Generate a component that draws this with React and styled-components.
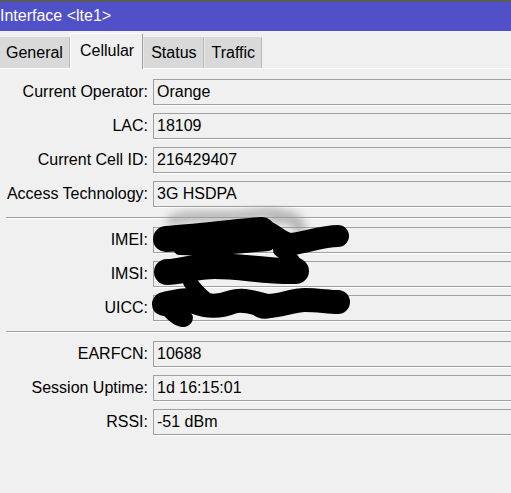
import React from "react";
import styled, { createGlobalStyle } from "styled-components";

const GlobalStyle = createGlobalStyle`
  html, body {
    margin: 0;
    padding: 0;
    background: #f0f0f0;
    overflow: hidden;
  }
  body {
    font-family: "Liberation Sans", Arial, sans-serif;
    font-size: 16px;
    color: #000;
  }
`;

const tabs = ["General", "Cellular", "Status", "Traffic"];

const groups = [
  [
    ["Current Operator:", "Orange"],
    ["LAC:", "18109"],
    ["Current Cell ID:", "216429407"],
    ["Access Technology:", "3G HSDPA"],
  ],
  [
    ["IMEI:", ""],
    ["IMSI:", ""],
    ["UICC:", ""],
  ],
  [
    ["EARFCN:", "10688"],
    ["Session Uptime:", "1d 16:15:01"],
    ["RSSI:", "-51 dBm"],
  ],
];

function Scribbles() {
  return (
    <Overlay viewBox="0 0 511 493" width="511" height="493">
      <defs>
        <filter id="smudge" x="-20%" y="-50%" width="140%" height="200%">
          <feGaussianBlur stdDeviation="4" />
        </filter>
      </defs>
      <g filter="url(#smudge)" fill="none" stroke="#9a9a9a" strokeLinecap="round" opacity="0.7">
        <path d="M172 220 C 190 214, 210 218, 240 216 C 258 214, 268 212, 278 214" strokeWidth="10" />
        <path d="M276 218 C 288 214, 298 220, 300 228" strokeWidth="12" />
      </g>
      <g fill="none" stroke="#000" strokeLinecap="round" strokeLinejoin="round">
        <path d="M166 239 C 195 237, 235 232, 262 230" strokeWidth="26" />
        <path d="M180 248 C 215 250, 245 246, 268 244" strokeWidth="14" />
        <path d="M262 231 C 272 231, 280 244, 292 244 C 308 242, 322 236, 338 236" strokeWidth="22" />
        <path d="M280 250 C 290 256, 296 262, 297 270" strokeWidth="14" />
        <path d="M167 272 C 180 272, 195 266, 215 266 C 240 266, 270 272, 296 271" strokeWidth="26" />
        <path d="M190 282 C 196 290, 200 294, 205 298" strokeWidth="14" />
        <path d="M164 304 C 175 302, 185 298, 195 302 C 210 308, 222 306, 232 302 C 245 298, 255 304, 268 306 C 282 306, 292 300, 305 300 C 318 300, 328 302, 338 302" strokeWidth="24" />
        <path d="M170 312 C 178 320, 184 322, 186 318" strokeWidth="14" />
        <path d="M255 310 C 262 316, 270 314, 276 310" strokeWidth="10" />
      </g>
    </Overlay>
  );
}

function App() {
  return (
    <Window>
      <GlobalStyle />
      <TitleBar>Interface &lt;lte1&gt;</TitleBar>
      <TabStrip>
        {tabs.map((t) => (
          <Tab key={t} $active={t === "Cellular"}>
            {t}
          </Tab>
        ))}
      </TabStrip>
      <Form>
        {groups.map((rows, i) => (
          <React.Fragment key={i}>
            {i > 0 && <Divider />}
            {rows.map(([label, value]) => (
              <Row key={label}>
                <Label>{label}</Label>
                <Field>{value}</Field>
              </Row>
            ))}
          </React.Fragment>
        ))}
      </Form>
      <Scribbles />
    </Window>
  );
}

export default App;

const Window = styled.div`
  position: relative;
  width: 511px;
  height: 493px;
  display: flex;
  flex-direction: column;
  background: #f0f0f0;
  overflow: hidden;
`;

const TitleBar = styled.div`
  box-sizing: border-box;
  height: 31px;
  border-top: 2px solid #5c5c5c;
  background: #5050c9;
  color: #fff;
  display: flex;
  align-items: center;
  padding-bottom: 1px;
  white-space: nowrap;
`;

const TabStrip = styled.div`
  box-sizing: border-box;
  height: 38px;
  display: flex;
  align-items: flex-end;
  border-bottom: 1px solid #fff;
`;

const Tab = styled.div`
  box-sizing: border-box;
  display: flex;
  align-items: center;
  height: ${(p) => (p.$active ? "36px" : "31px")};
  margin-bottom: ${(p) => (p.$active ? "-1px" : "0")};
  padding: ${(p) => (p.$active ? "0 8px 2px 9px" : "0 6px 0 7px")};
  background: ${(p) => (p.$active ? "#f0f0f0" : "#d9d9d9")};
  border-top: 1px solid ${(p) => (p.$active ? "#fff" : "#d9d9d9")};
  border-left: 1px solid ${(p) => (p.$active ? "#fff" : "#e9e9e9")};
  border-right: 1px solid ${(p) => (p.$active ? "#a0a0a0" : "#b9b9b9")};
  position: relative;
  z-index: ${(p) => (p.$active ? 1 : 0)};
  white-space: nowrap;

  &:first-child {
    margin-left: -2px;
  }
`;

const Form = styled.div`
  display: flex;
  flex-direction: column;
  gap: 8px;
  padding: 10px 0 0 6px;
`;

const Row = styled.div`
  display: grid;
  grid-template-columns: 142px 1fr;
  column-gap: 5px;
  align-items: center;
  height: 26px;
`;

const Label = styled.div`
  text-align: right;
  white-space: nowrap;
`;

const Field = styled.div`
  box-sizing: border-box;
  height: 26px;
  display: flex;
  align-items: center;
  padding-left: 3px;
  border: 1px solid #a0a0a0;
  border-right: none;
  box-shadow: 0 1px 0 #fff;
  white-space: nowrap;
`;

const Divider = styled.div`
  height: 1px;
  margin: 2px 0 1px;
  background: #a0a0a0;
  box-shadow: 0 1px 0 #fff;
`;

const Overlay = styled.svg`
  position: absolute;
  top: 0;
  left: 0;
  pointer-events: none;
`;
